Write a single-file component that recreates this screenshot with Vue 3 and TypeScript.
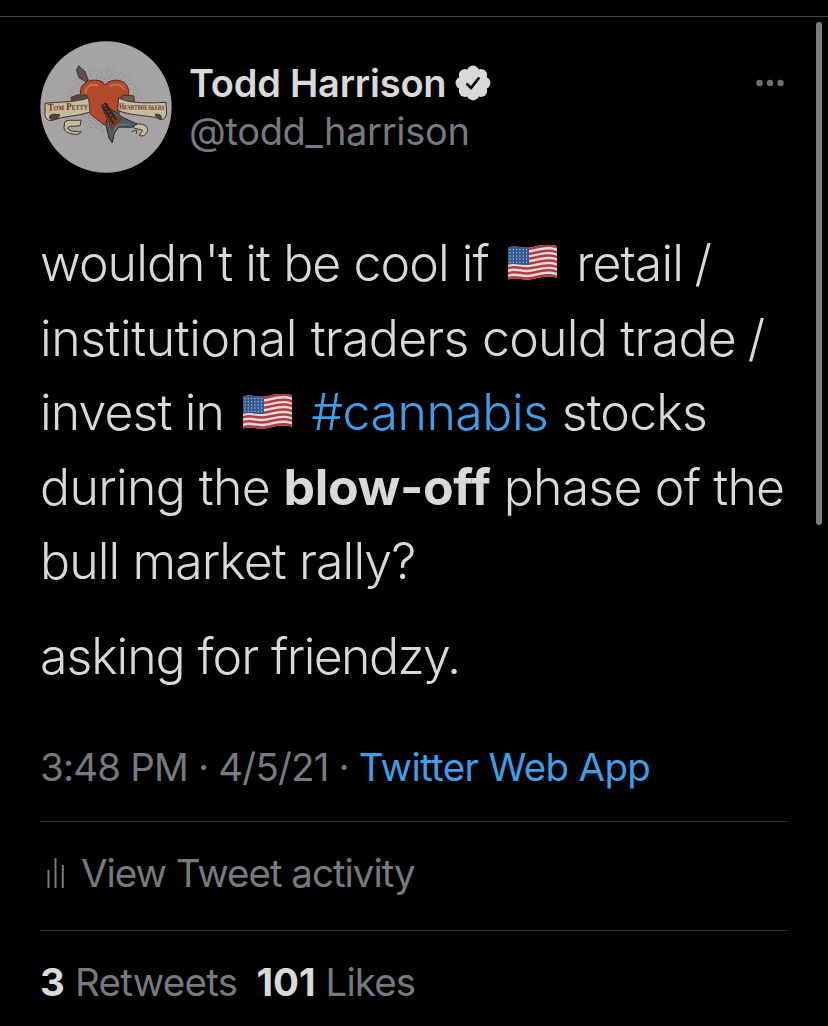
<template>
  <main class="screen">
    <div class="top-line"></div>
    <div class="scrollbar"></div>
    <article class="tweet">
      <header class="header">
        <svg class="avatar" viewBox="31 33 396 396">
          <circle cx="229" cy="231" r="197" fill="#a5a4a4" />
          <g class="speckles">
            <circle v-for="(s, i) in speckles" :key="i" :cx="s.x" :cy="s.y" :r="s.r" />
          </g>
          <path d="M140 120L147 107L166 124L176 150L168 155L148 143Z" fill="#4b555c" stroke="#292321" stroke-width="2" />
          <path d="M153 132L164 130L172 151L163 149Z" fill="#8c3e31" />
          <path d="M225 286C194 262 153 235 152 193C151 158 177 148 202 151C214 152 222 158 227 165C237 151 254 149 270 152C294 157 300 179 296 203C289 239 254 260 225 286Z" fill="#b34a2c" stroke="#55251b" stroke-width="3" />
          <path d="M168 188C169 169 185 160 204 166M242 168C258 159 275 164 282 177" fill="none" stroke="#c9704a" stroke-width="6" stroke-linecap="round" />
          <g class="ribbon">
            <path d="M126 216L124 202L146 194L172 196L177 211L146 207Z" fill="#574a3d" />
            <path d="M268 207L282 195L313 198L314 214L294 219Z" fill="#6b5c4a" />
            <path d="M46 220C86 215 132 218 177 204L181 246C143 260 106 257 66 271C51 274 43 258 46 245Z" />
            <path d="M62 256C56 262 62 270 70 270C82 267 89 262 90 254C80 254 70 250 62 256Z" fill="#51463b" />
            <path d="M267 204C305 222 357 219 409 217L411 249C408 268 397 273 383 264C345 255 301 257 264 241Z" />
            <path d="M376 254C386 249 399 257 394 267C386 268 380 261 376 254Z" fill="#51463b" />
            <path d="M105 276C118 266 143 274 154 270L152 286C135 292 119 284 113 295L124 303L155 306L146 313C124 314 103 307 103 293Z" />
            <path d="M312 285C326 278 353 282 354 298C353 313 340 322 329 316L339 302C332 296 320 298 312 294Z" />
            <path d="M306 305L321 301L319 312" />
          </g>
          <text x="55" y="242" class="banner banner-left" textLength="120" lengthAdjust="spacingAndGlyphs" transform="rotate(-2 55 242)">Tom Petty</text>
          <text x="268" y="238" class="banner banner-right" textLength="136" lengthAdjust="spacingAndGlyphs" transform="rotate(1 268 238)">Heartbreakers</text>
          <path d="M216 226L229 219L239 236L262 248L278 262L322 282L306 292L267 291L254 309L248 338L238 325L228 280L233 266L224 248Z" fill="#4c5c63" stroke="#292524" stroke-width="3" />
          <path d="M218 228L229 220L256 254L279 267L263 286L249 313L235 273Z" fill="#803629" />
          <path d="M218 228L252 282M228 220L260 270M226 233L235 228M230 242L242 235M235 252L247 247M238 264L255 255" stroke="#292625" stroke-width="5" />
          <path d="M246 318L252 294L266 280L308 284L268 288L254 306Z" fill="#5f6f76" />
        </svg>
        <div class="author">
          <div class="name-row">
            <span class="name">Todd Harrison</span>
            <svg class="badge" viewBox="0 0 36 36">
              <g fill="#d9d9d9">
                <circle cx="18" cy="18" r="13.5" />
                <circle v-for="p in petals" :key="p.x + '-' + p.y" :cx="p.x" :cy="p.y" r="6.2" />
              </g>
              <path d="M11.5 18.5L16 23L24.2 12.5" fill="none" stroke="#000" stroke-width="2.6" />
            </svg>
          </div>
          <div class="handle">@todd_harrison</div>
        </div>
        <svg class="more" viewBox="0 0 28 8">
          <circle cx="3.5" cy="4" r="3.2" />
          <circle cx="14" cy="4" r="3.2" />
          <circle cx="24.5" cy="4" r="3.2" />
        </svg>
      </header>

      <div class="body">
        <div v-for="(line, i) in lines" :key="i" class="line" :class="{ paragraph: i === 5 }">
          <template v-for="(part, j) in line" :key="j">
            <svg v-if="part.kind === 'flag'" class="flag" viewBox="0 0 49 35">
              <path :d="wave(0, 32)" fill="#dedada" />
              <path v-for="n in 7" :key="n" :d="wave((n - 1) * 4.9, 2.5)" fill="#b43b43" />
              <path d="M0 2.5C6 .5 14 3.5 21 2.6V19.8C14 20.7 6 17.7 0 19.7Z" fill="#315a91" />
              <g fill="#a9bdd5">
                <circle v-for="s in stars" :key="s.x + '-' + s.y" :cx="s.x" :cy="s.y" r=".75" />
              </g>
            </svg>
            <span v-else :class="part.kind" :style="{ letterSpacing: part.spacing + 'px' }">{{ part.text }}</span>
          </template>
        </div>
      </div>

      <div class="meta">
        <span class="date">3:48 PM · 4/5/21 · </span><a class="source">Twitter Web App</a>
      </div>
      <div class="activity">
        <svg class="bars" viewBox="0 0 18 32">
          <path d="M1.5 13V31M8.5 1V31M15.8 8V31" />
        </svg>
        <span class="activity-label">View Tweet activity</span>
      </div>
      <footer class="stats">
        <span><b>3</b> Retweets</span>
        <span class="likes"><b>101</b> Likes</span>
      </footer>
    </article>
  </main>
</template>

<script setup lang="ts">
interface Part {
  kind: 'plain' | 'bold' | 'tag' | 'flag'
  text?: string
  spacing?: number
}

const lines: Part[][] = [
  [{ kind: 'plain', text: "wouldn't it be cool if ", spacing: -0.93 }, { kind: 'flag' }, { kind: 'plain', text: ' retail', spacing: -0.9 }, { kind: 'plain', text: ' /', spacing: -2.4 }],
  [{ kind: 'plain', text: 'institutional ', spacing: -0.43 }, { kind: 'plain', text: 'traders could trade', spacing: -0.75 }, { kind: 'plain', text: ' /', spacing: -2.2 }],
  [{ kind: 'plain', text: 'invest in ', spacing: -0.88 }, { kind: 'flag' }, { kind: 'plain', text: ' ', spacing: -0.9 }, { kind: 'tag', text: '#cannabis', spacing: -0.5 }, { kind: 'plain', text: ' stocks', spacing: -0.8 }],
  [{ kind: 'plain', text: 'during the ', spacing: -0.65 }, { kind: 'bold', text: 'blow-off', spacing: -0.3 }, { kind: 'plain', text: ' phase of the', spacing: -0.8 }],
  [{ kind: 'plain', text: 'bull market rally?', spacing: -0.9 }],
  [{ kind: 'plain', text: 'asking for ', spacing: -1.05 }, { kind: 'plain', text: 'friendzy.', spacing: -1.6 }],
]

const petals = Array.from({ length: 8 }, (_, i) => {
  const angle = (i * Math.PI) / 4
  return { x: 18 + Math.cos(angle) * 11.2, y: 18 + Math.sin(angle) * 11.2 }
})

// ink spatter around the heart
const speckles = Array.from({ length: 520 }, (_, i) => {
  const angle = i * 2.39996
  const dist = 58 + Math.pow(((i * 37) % 101) / 101, 1.5) * 50
  return {
    x: 222 + Math.cos(angle) * dist * 1.05,
    y: 209 + Math.sin(angle) * dist * 0.9,
    r: 0.7 + (i % 4) * 0.35,
  }
})

const stars = Array.from({ length: 30 }, (_, i) => ({
  x: 2 + (i % 6) * 3.3,
  y: 4.5 + Math.floor(i / 6) * 3.2,
}))

// one horizontal band that follows the flag's ripple
const wave = (y: number, h: number) => {
  const top = y + 2.5
  const bottom = top + h
  return `M0 ${top}C8 ${top - 3} 15 ${top + 2} 25 ${top - 0.5}S41 ${top - 4} 49 ${top - 1.5}V${bottom - 1.5}C41 ${bottom - 4} 35 ${bottom - 3} 25 ${bottom - 0.5}S8 ${bottom - 3} 0 ${bottom}Z`
}
</script>

<style>
body {
  background: #000;
}
</style>

<style scoped>
.screen {
  position: relative;
  display: flow-root;
  width: 828px;
  height: 1026px;
  overflow: hidden;
  background: #000;
  font-family: Inter, "Liberation Sans", sans-serif;
  color: #d9d9d9;
}

.top-line {
  height: 1px;
  margin-top: 16px;
  background: #464646;
}

.scrollbar {
  position: absolute;
  top: 22px;
  right: 6px;
  width: 6px;
  height: 503px;
  border-radius: 3px;
  background: #7c7c7c;
}

.tweet {
  padding: 24px 40px 0;
}

.header {
  display: flex;
  height: 132px;
}

.avatar {
  flex: none;
  width: 132px;
  height: 132px;
}

.speckles {
  fill: #8d5942;
  opacity: 0.65;
}

.ribbon {
  fill: #c5b99e;
  stroke: #3d342c;
  stroke-width: 3;
  stroke-linejoin: round;
}

.banner {
  font-family: "Liberation Serif", serif;
  font-weight: 700;
  font-variant: small-caps;
  fill: #712e25;
}

.banner-left {
  font-size: 31px;
}

.banner-right {
  font-size: 28px;
}

.author {
  margin-left: 17px;
  padding-top: 18px;
}

.name-row {
  display: flex;
  align-items: center;
  height: 48px;
}

.name {
  font-size: 38px;
  font-weight: 600;
  line-height: 46px;
  letter-spacing: -0.25px;
  white-space: nowrap;
}

.badge {
  width: 36px;
  height: 36px;
  margin-left: 9px;
}

.handle {
  font-size: 38px;
  line-height: 48px;
  color: #77797f;
  letter-spacing: -0.3px;
}

.more {
  width: 28px;
  height: 8px;
  margin: 38px 4px 0 auto;
  fill: #6f7075;
}

.body {
  margin-top: 53px;
  font-size: 50px;
  font-weight: 300;
  line-height: 74.6px;
}

.line {
  height: 74.6px;
  white-space: pre;
}

.paragraph {
  margin-top: 20.5px;
}

.bold {
  font-weight: 700;
  font-variant-ligatures: none;
}

.tag,
.source {
  color: #409ee6;
}

.flag {
  display: inline-block;
  width: 49px;
  height: 35px;
  margin: 0 6px;
  vertical-align: 1px;
}

.meta {
  margin-top: 50px;
  height: 77px;
  font-size: 38.5px;
  line-height: 46px;
  white-space: pre;
  border-bottom: 1px solid #333436;
}

.meta,
.activity,
.stats {
  color: #77797f;
}

.date {
  letter-spacing: -0.82px;
}

.source {
  letter-spacing: -0.67px;
}

.activity {
  display: flex;
  height: 109px;
  padding-top: 28px;
  box-sizing: border-box;
  font-size: 38.5px;
  line-height: 46px;
  border-bottom: 1px solid #333436;
}

.activity-label {
  letter-spacing: -1.02px;
}

.bars {
  width: 18px;
  height: 32px;
  margin: 7px 16px 0 7px;
  fill: none;
  stroke: #77797f;
  stroke-width: 2;
}

.stats {
  display: flex;
  gap: 19px;
  padding-top: 28px;
  font-size: 38.5px;
  line-height: 46px;
  letter-spacing: -0.7px;
}

.likes {
  letter-spacing: -0.9px;
}

.stats b {
  font-weight: 700;
  color: #d9d9d9;
  letter-spacing: 0;
}
</style>
